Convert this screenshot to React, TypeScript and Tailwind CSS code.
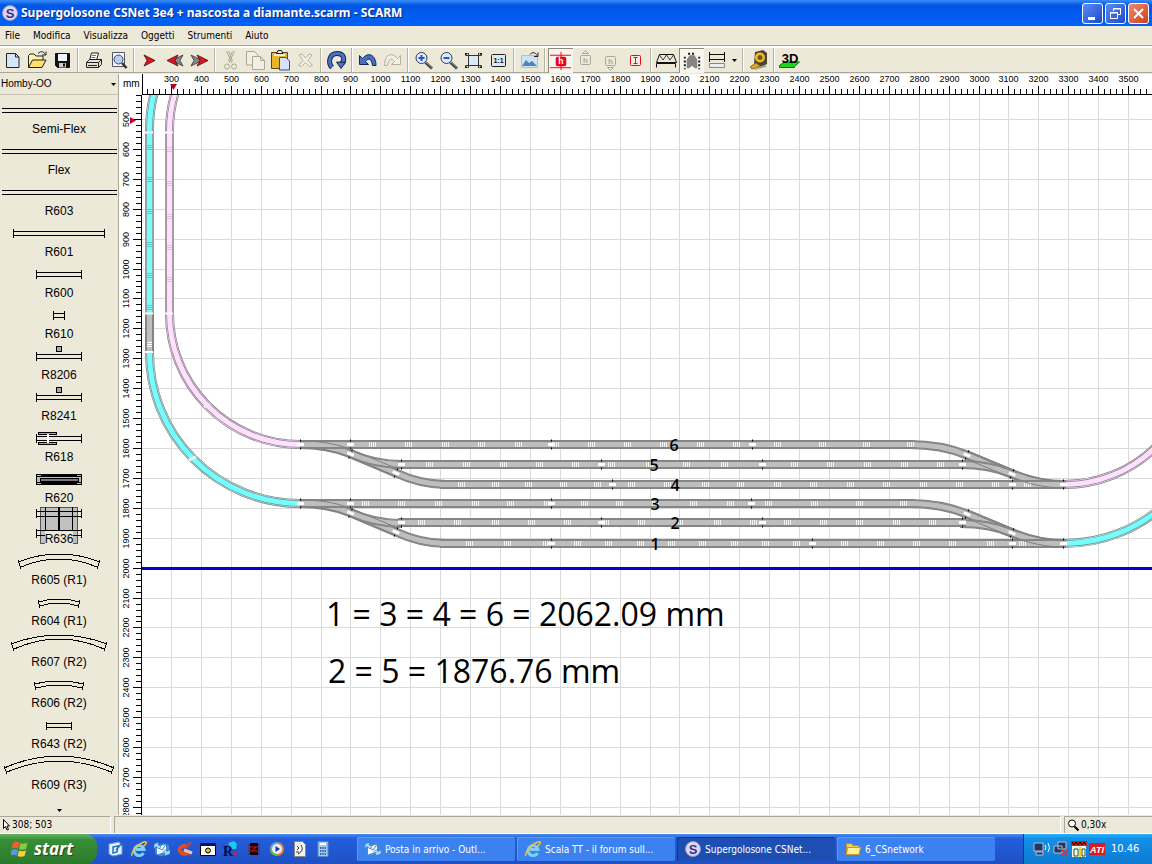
import React from "react";

// Plan scale: 100 mm on the layout is just under 30 px on screen
const SCALE = 0.2991;
const mmToX = (mm: number) => Math.round(29 + (mm - 300) * SCALE) + 0.5;
const mmToY = (mm: number) => Math.round(24 + (mm - 500) * SCALE) + 0.5;
const range = (from: number, to: number, step: number) =>
  Array.from({ length: Math.floor((to - from) / step) + 1 }, (_, i) => from + i * step);

const MENUS = ["File", "Modifica", "Visualizza", "Oggetti", "Strumenti", "Aiuto"];

/* ---------- Toolbar ---------- */

const arrowRight = "l11 5.5l-11 5.5l3 -5.5z";
const arrowLeft = "l-11 5.5l11 5.5l-3 -5.5z";

const Magnifier = ({ children }: { children?: React.ReactNode }) => (
  <>
    <path d="M14.5 14.5L21 20.5" stroke="#444" strokeWidth="3" />
    <path d="M15 14L21 19.5" stroke="#999" />
    <circle cx="10.5" cy="10" r="5.5" fill="#dcecff" stroke="#333c58" />
    {children}
  </>
);

const ICONS: Record<string, React.ReactNode> = {
  New: <path d="M6.5 5.5h9l3.5 3.5v10.5h-12.5zM15.5 5.5v3.5h3.5" fill="#d5e6fa" stroke="#222" />,
  Open: (
    <>
      <path d="M3.5 19.5v-12l1.5-1.5h4l2 2h7v4" fill="#fff3a8" stroke="#222" />
      <path d="M3.5 19.5l4-7.5h13.5l-4 7.5z" fill="#ffe168" stroke="#222" />
      <path d="M13 5.5c3-3 6-2 7 1m1-3v3.5h-4" stroke="#222" fill="none" />
    </>
  ),
  Save: (
    <>
      <path d="M5.5 5.5h14v14h-12l-2-2z" fill="#111" stroke="#111" />
      <path d="M8 6h9v7h-9z" fill="#eef4ff" />
      <path d="M9 15h7v4.5h-7z" fill="#ccc" />
      <path d="M13 15.5h2v3h-2z" fill="#111" />
    </>
  ),
  Print: (
    <>
      <path d="M8.5 12.5l2-7.5h7l-2 7.5z" fill="#fff" stroke="#222" />
      <path d="M11 7.5h4M10.5 9.5h4" stroke="#777" />
      <path d="M5.5 14.5l3-3h12v5l-3 3h-12z" fill="#e2e2da" stroke="#222" />
      <path d="M5.5 14.5h12v5M17.5 14.5l3-3M7 17.5h9" stroke="#222" fill="none" />
    </>
  ),
  Preview: (
    <>
      <path d="M6.5 4.5h12v14h-12z" fill="#f5f8ff" stroke="#556" />
      <path d="M16 15L20.5 20" stroke="#333" strokeWidth="2.5" />
      <circle cx="12.5" cy="11.5" r="4.5" fill="#b7d0ef" stroke="#446" />
    </>
  ),
  Start: <path d={"M7 7" + arrowRight} fill="#e8101c" stroke="#301010" strokeWidth=".8" />,
  Previous: (
    <>
      <path d={"M21 7" + arrowLeft} fill="#888" stroke="#333" strokeWidth=".8" />
      <path d={"M16 7" + arrowLeft} fill="#e8101c" stroke="#301010" strokeWidth=".8" />
    </>
  ),
  Next: (
    <>
      <path d={"M4 7" + arrowRight} fill="#888" stroke="#333" strokeWidth=".8" />
      <path d={"M10 7" + arrowRight} fill="#e8101c" stroke="#301010" strokeWidth=".8" />
    </>
  ),
  Cut: (
    <g fill="none" stroke="#aca899">
      <path d="M8.5 3l5.5 12M16.5 3l-5.5 12M10.5 3l4 10M14.5 3l-4 10" />
      <circle cx="9" cy="18.5" r="2.5" />
      <circle cx="16" cy="18.5" r="2.5" />
    </g>
  ),
  Copy: (
    <g fill="#f1efe2" stroke="#aca899">
      <path d="M3.5 3.5h8l3 3v10.5h-11z" />
      <path d="M9.5 8.5h8l4 4v9h-12zM17.5 8.5v4h4" />
    </g>
  ),
  Paste: (
    <>
      <path d="M3.5 4.5h16v16h-16z" fill="#e9b52c" stroke="#5b4510" />
      <path d="M6 6h11v2h-11z" fill="#eee" />
      <path d="M8.5 5.5l1.5-3h3.5l1.5 3z" fill="#f8e79b" stroke="#222" />
      <path d="M11.5 9.5h6.5l3.5 3.5v9h-10z" fill="#d5e4fb" stroke="#31507c" />
    </>
  ),
  Delete: <path d="M6 7l3-1 3.5 4 3.5-4 3 1-4 5.5 4.5 5-3 1-4-4-4 4-3-1 4.5-5z" fill="#f1efe2" stroke="#b5b1a2" />,
  Rotate: (
    <>
      <path d="M8 19.5c-4.5-5-2.500-14 5-14s8 6 5 10" fill="none" stroke="#182450" strokeWidth="5" />
      <path d="M8 19.5c-4.5-5-2.500-14 5-14s8 6 5 10" fill="none" stroke="#4a70c4" strokeWidth="3" />
      <path d="M12.5 14l9 .5-4.5 6z" fill="#4a70c4" stroke="#182450" />
    </>
  ),
  Undo: <path d="M4.5 7.5v9h9l-3-3c3-4 6-3 7 4h3.5c0-11-8-14-13.5-7z" fill="#456fc4" stroke="#17264e" />,
  Redo: <path d="M20.5 7.5v9h-9l3-3c-3-4-6-3-7 4h-3c0-11 7-14 13-7z" fill="#f1efe2" stroke="#b5b1a2" />,
  "Zoom in": <Magnifier><path d="M7.5 10h6M10.5 7v6" stroke="#2b55c8" strokeWidth="2" /></Magnifier>,
  "Zoom out": <Magnifier><path d="M7.5 10h6" stroke="#2b55c8" strokeWidth="2" /></Magnifier>,
  Fit: (
    <>
      <path d="M7.5 7.5h10v10h-10z" fill="#dbe8f6" />
      <path d="M7.5 5v15M17.500 5v15M5 7.5h15M5 17.5h15" stroke="#333" />
      <path d="M4 5h3l-3 3zM21 5h-3l3 3zM4 20h3l-3-3zM21 20h-3l3-3z" fill="#111" />
    </>
  ),
  "Actual size": (
    <>
      <rect x="5.5" y="6.5" width="14" height="12" rx="1" fill="#dbe8f6" stroke="#222" />
      <text x="12.5" y="15" textAnchor="middle" fontSize="7" fontWeight="700" fill="#111">1:1</text>
    </>
  ),
  Background: (
    <>
      <path d="M4.5 7.5h16v12h-16z" fill="#cde3f5" stroke="#a5c4e0" />
      <path d="M5 18l4-6 3 3 3-2 5 5z" fill="#4f84b5" />
      <path d="M13 6.5c2-3 6-2 7 1m1-3v4h-4" stroke="#222" fill="none" />
    </>
  ),
  "Track height": (
    <>
      <path d="M1 6.5h22M1 19.5h22M12.5 3v19" stroke="#f00018" />
      <rect x="7" y="8" width="11" height="10" rx="2" fill="#f00018" />
      <text x="12.5" y="16" textAnchor="middle" fontSize="9" fontWeight="700" fill="#fff">h</text>
    </>
  ),
  Raise: (
    <>
      <rect x="7.5" y="7.5" width="10" height="9" rx="1" fill="none" stroke="#aca899" />
      <path d="M9.5 5.5l3-3 3 3z" fill="none" stroke="#aca899" />
      <text x="12.5" y="15" textAnchor="middle" fontSize="8" fontWeight="700" fill="#aca899">h</text>
    </>
  ),
  Lower: (
    <>
      <rect x="7.5" y="8.5" width="10" height="9" rx="1" fill="none" stroke="#aca899" />
      <path d="M9.5 19.5l3 3 3-3z" fill="none" stroke="#aca899" />
      <text x="12.5" y="16" textAnchor="middle" fontSize="8" fontWeight="700" fill="#aca899">h</text>
    </>
  ),
  "Vertical lock": (
    <>
      <rect x="7.5" y="7.5" width="10" height="10" rx="1" fill="#fbe9e4" stroke="#e01020" />
      <path d="M12.5 9v7M10.5 9.5h4M10.5 15.5h4" stroke="#e01020" />
    </>
  ),
  Bridge: (
    <>
      <path d="M2.5 14.5l3-8h14l3 8z" fill="none" stroke="#111" />
      <path d="M5.5 7l3.500 5 3.500-5 3.500 5 3.500-5" fill="none" stroke="#111" strokeWidth=".8" />
      <path d="M2.5 19.500v-4h19v4" fill="none" stroke="#111" />
    </>
  ),
  Tunnel: (
    <>
      <path d="M7 20v-9l3-4.500h5l3 4.500v9h-2.500l-3-2.500-3 2.500z" fill="#858585" />
      <path d="M8.500 5h8M5 8v13M20 8v13" stroke="#111" strokeWidth="2" strokeDasharray="2 2" />
    </>
  ),
  Layers: (
    <>
      <path d="M5 6.5h16M5 11.5h16M5.5 4v10M20.5 4v10" stroke="#111" />
      <path d="M5.5 15.5h15v4h-15z" fill="#eee" stroke="#888" />
    </>
  ),
  Measure: (
    <>
      <path d="M9 4l8-2 4 3v11l-6 3-7-3z" fill="#4a4434" />
      <circle cx="14" cy="9.5" r="5" fill="#f4bd1b" />
      <circle cx="14" cy="9.5" r="2.5" fill="#6a5a2a" />
      <path d="M10 15l-6 4 2 2 8-3z" fill="#e6a918" stroke="#8a6a20" />
      <path d="M8 21l12-3" stroke="#a6a291" strokeWidth="2" />
    </>
  ),
  "3D view": (
    <>
      <path d="M2.5 17.500l5-3.500h15l-5 4.500v1h-15z" fill="#18d818" stroke="#087808" />
      <text x="13" y="15" textAnchor="middle" fontSize="13" fontWeight="700" fill="#000">3D</text>
    </>
  ),
};

const TOOL_GROUPS = [
  ["New", "Open", "Save"],
  ["Print", "Preview"],
  ["Start", "Previous", "Next"],
  ["Cut", "Copy", "Paste", "Delete"],
  ["Rotate"],
  ["Undo", "Redo"],
  ["Zoom in", "Zoom out", "Fit", "Actual size"],
  ["Background"],
  ["Track height", "Raise", "Lower", "Vertical lock"],
  ["Bridge", "Tunnel", "Layers", "menu"],
  ["Measure"],
  ["3D view"],
];
const PRESSED = ["Track height", "Tunnel"];

function Toolbar() {
  return (
    <div className="flex h-[25px] shrink-0 border-b border-[#aca899] font-['Liberation_Sans']">
      {TOOL_GROUPS.map((group, i) => (
        <div key={i} className="flex">
          {i > 0 && <div className="mx-[2px] w-[2px] border-l border-[#b8b4a5] bg-white" />}
          {group.map((name) =>
            name === "menu" ? (
              <button key={name} aria-label="Layer list" className="flex w-[11px] items-center justify-center">
                <svg width="5" height="3"><path d="M0 0h5l-2.5 3z" /></svg>
              </button>
            ) : (
              <button
                key={name}
                aria-label={name}
                className={`h-[25px] w-[25px] ${
                  PRESSED.includes(name) ? "border-t border-l border-[#8f8c7e] bg-[#f7f5ee]" : ""
                }`}
              >
                <svg viewBox="0 0 25 25" className="block size-full">{ICONS[name]}</svg>
              </button>
            )
          )}
        </div>
      ))}
    </div>
  );
}

/* ---------- Track library ---------- */

const straight = (x1: number, x2: number) => (
  <path d={`M${x1} 11.5H${x2}M${x1} 15.5H${x2}M${x1 + 0.5} 9v9M${x2 - 0.5} 9v9`} />
);
const flex = <path d="M2 11.5H117M2 15.5H117" />;
const curved = (x: number, endY: number, topY: number, inX: number, inEndY: number, inTopY: number) => {
  const r = 118 - x;
  const inR = 118 - inX;
  return (
    <path
      d={`M${x} ${endY}Q59 ${2 * topY - endY} ${r} ${endY}M${inX} ${inEndY}Q59 ${2 * inTopY - inEndY} ${inR} ${inEndY}
         M${x} ${endY - 2}L${inX} ${inEndY + 2}M${r} ${endY - 2}L${inR} ${inEndY + 2}`}
    />
  );
};
const feeder = (
  <>
    {straight(36, 82)}
    <path d="M56.5 3.5h5v5h-5z" fill="#aaa" />
  </>
);

const PARTS: { name: string; shape: React.ReactNode }[] = [
  { name: "Semi-Flex", shape: flex },
  { name: "Flex", shape: flex },
  { name: "R603", shape: flex },
  { name: "R601", shape: straight(13, 105) },
  { name: "R600", shape: straight(36, 82) },
  { name: "R610", shape: straight(53, 65) },
  { name: "R8206", shape: feeder },
  { name: "R8241", shape: feeder },
  {
    name: "R618",
    shape: (
      <>
        {straight(36, 82)}
        <path d="M38.5 7.5h18v2h-18zM38.5 17.5h18v2h-18z" fill="#aaa" />
        <path d="M48 9v9" stroke="#fff" strokeWidth="2" />
      </>
    ),
  },
  {
    name: "R620",
    shape: (
      <>
        <path d="M36.5 8.5h45v10h-45z" fill="#bbb" />
        <path d="M37 10.5h45M37 16.5h45M41 9.5h36M41 17.5h36" />
        <path d="M40 12h38v3h-38z" fill="#777" />
      </>
    ),
  },
  {
    name: "R636",
    shape: (
      <>
        <path d="M40.5 0v36h5V24h27v12h5V0z" fill="#c0c0c0" stroke="#555" />
        <path d="M45.5 0v24M72.5 0v24M36 4.5h46M36 9.5h46M36 23.5h46M36.5 2v9M81.5 2v9M36.5 22v9M81.5 22v9M36 28.5h9M73 28.5h9" />
        <path d="M59 0v24" strokeWidth="2" />
      </>
    ),
  },
  { name: "R605 (R1)", shape: curved(18, 14, 6, 21, 19, 11) },
  { name: "R604 (R1)", shape: curved(38, 13, 10, 40, 17, 14) },
  { name: "R607 (R2)", shape: curved(11, 14, 5, 14, 19, 9) },
  { name: "R606 (R2)", shape: curved(34, 13, 10, 36, 17, 14) },
  { name: "R643 (R2)", shape: curved(46, 12, 11, 47, 16, 15) },
  { name: "R609 (R3)", shape: curved(4, 15, 3, 7, 19, 8) },
];

function PartsPanel() {
  return (
    <aside className="flex w-[119px] shrink-0 flex-col overflow-hidden border-r border-[#aca899]">
      <div className="relative h-[21px] shrink-0 border-b border-[#c9c5b5]">
        <select aria-label="Library" className="block h-[20px] w-full appearance-none bg-transparent py-0 pl-px font-['Liberation_Sans'] text-[10px] leading-[20px] outline-none">
          <option>Homby-OO</option>
        </select>
        <svg width="5" height="3" className="pointer-events-none absolute top-[9px] right-[2px]"><path d="M0 0h5l-2.5 3z" /></svg>
      </div>
      <div className="min-h-0 flex-1 overflow-hidden pt-[2px]">
        {PARTS.map((part) => (
          <button key={part.name} className="flex h-[41px] w-full flex-col items-center font-['Liberation_Sans'] text-[12px] leading-[16px]">
            <svg height="24" className="block w-[118px] shrink-0 overflow-visible" fill="none" stroke="#000" shapeRendering="crispEdges">
              {part.shape}
            </svg>
            <span className="relative bg-[#ece9d8]">{part.name}</span>
          </button>
        ))}
        <div className="flex h-[40px] justify-center pt-[15px]">
          <svg width="5" height="3"><path d="M0 0h5l-2.5 3z" /></svg>
        </div>
      </div>
    </aside>
  );
}

/* ---------- Track plan ---------- */

const PALETTE = {
  gray: { edge: "#808080", bed: "#929292", fill: "#bebebe" },
  cyan: { edge: "#808c8c", bed: "#c4f0f0", fill: "#72ffff" },
  pink: { edge: "#90808f", bed: "#f6e6f6", fill: "#ffe0ff" },
};

function Track({ d, color }: { d: string; color: keyof typeof PALETTE }) {
  const c = PALETTE[color];
  return (
    <g fill="none">
      <path d={d} stroke={c.edge} strokeWidth="9" />
      <path d={d} stroke={c.bed} strokeWidth="7.5" />
      <path d={d} stroke={c.edge} strokeWidth="6.5" />
      <path d={d} stroke={c.fill} strokeWidth="5" />
    </g>
  );
}

const Joint = ({ x, y, angle = 0 }: { x: number; y: number; angle?: number }) => (
  <g transform={`translate(${x} ${y}) rotate(${angle})`}>
    <path d="M0 -5v2M0 3v2" stroke="#000" />
    <path d="M-3.5 0h7" stroke="#fff" strokeWidth="3" />
  </g>
);

// Yard tracks: sleeper marks and rail joints by x position
const YARD = [
  { no: 6, y: 444.5, labelX: 674, from: 300, to: 915, marks: [373, 409, 446, 482, 519, 556, 592, 628, 664, 701, 737, 778, 823, 867, 911], joints: [350, 551, 752] },
  { no: 5, y: 464.5, labelX: 654, from: 398, to: 966, marks: [430, 467, 504, 540, 576, 612, 650, 687, 725, 795, 831, 868, 905, 941], joints: [401, 601, 762, 962] },
  { no: 4, y: 484.5, labelX: 675, from: 440, to: 1066, marks: [462, 496, 529, 564, 598, 632, 668, 706, 741, 778, 814, 851, 887, 924, 960, 996, 1028], joints: [612, 1012] },
  { no: 3, y: 503.5, labelX: 655, from: 300, to: 915, marks: [366, 402, 439, 476, 511, 548, 585, 620, 656, 694, 731, 769, 815, 860, 904], joints: [350, 551, 751] },
  { no: 2, y: 522.5, labelX: 675, from: 398, to: 966, marks: [422, 458, 496, 532, 568, 606, 642, 680, 718, 754, 788, 824, 860, 897, 933], joints: [401, 601, 762, 962] },
  { no: 1, y: 543.5, labelX: 655, from: 440, to: 1066, marks: [470, 508, 547, 578, 609, 641, 672, 703, 735, 766, 797, 845, 881, 917, 953, 991, 1023], joints: [551, 812, 1012] },
];

function Plan() {
  return (
    <svg className="block size-full bg-white font-['Open_Sans']">
      <g stroke="#dadada" shapeRendering="crispEdges">
        {range(300, 9000, 100).map((mm) => (
          <React.Fragment key={mm}>
            <line x1={mmToX(mm)} x2={mmToX(mm)} y1="0" y2="100%" />
            <line y1={mmToY(mm + 200)} y2={mmToY(mm + 200)} x1="0" x2="100%" />
          </React.Fragment>
        ))}
      </g>
      <rect x="0" y="472" width="100%" height="3" fill="#0000d8" />

      <g transform="translate(-142 -95)">
        {/* Main line curves */}
        <Track color="cyan" d="M155 90A150 150 0 0 0 149.5 132V314" />
        <Track color="gray" d="M149.5 314V352" />
        <Track color="cyan" d="M149.5 352A151 151 0 0 0 300 503.5" />
        <Track color="pink" d="M176 90A131 131 0 0 0 169.5 132V313A131 131 0 0 0 300 444.5" />
        <Track color="pink" d="M1064 484.5A131 131 0 0 0 1195 353" />
        <Track color="cyan" d="M1064 543.5A150 150 0 0 0 1214 393" />
        {[148, 180, 212, 245, 276, 308].map((y) => (
          <path key={y} d={`M147 ${y - 2.5}h5m-5 2h5m-5 2h5`} stroke="#5cc8cc" />
        ))}
        {[150, 184, 217, 248, 280].map((y) => (
          <path key={y} d={`M167 ${y - 2.5}h5m-5 2h5m-5 2h5`} stroke="#e4c0e4" />
        ))}
        <path d="M147 342.5h5m-5 2h5m-5 2h5" stroke="#fff" />
        <path d="M145 132.5h8M145 313.5h8M145 352h8M165 132.5h8M165 313.5h8" stroke="#fff" strokeWidth="2" />
        <path d="M204 407l6 -3M189 460l7 -3" stroke="#eee" strokeWidth="3" />

        {/* Ladders, drawn once for each half of the yard */}
        {[0, 59].map((dy) => (
          <g key={dy} transform={`translate(0 ${dy})`}>
            <Track color="gray" d="M300 444.5C320 444.5 335 447.5 350 453.5L396 473C412 480.5 428 484.5 446 484.5" />
            <Track color="gray" d="M350 453.5C366 460.5 382 464.5 402 464.5" />
            <Track color="gray" d="M910 444.5C935 444.5 951 448.5 967 455L1012 474C1030 481 1046 484.5 1064 484.5" />
            <Track color="gray" d="M960 464.5C982 464.5 998 468 1012 474" />
          </g>
        ))}
        {YARD.map((t) => (
          <g key={t.no}>
            <Track color="gray" d={`M${t.from} ${t.y}H${t.to}`} />
            {t.marks.map((x) => (
              <path key={x} d={`M${x - 3.5} ${t.y - 2.5}v5m2 -5v5m2 -5v5m2 -5v5`} stroke="#f4f4f4" />
            ))}
            {t.joints.map((x) => (
              <Joint key={x} x={x + 0.5} y={t.y} />
            ))}
          </g>
        ))}
        {[0, 59].map((dy) => (
          <g key={dy} transform={`translate(0 ${dy})`}>
            {/* Rails of the turnouts crossing the straight tracks */}
            <path
              d="M300 441C325 441 340 445 352 450L398 469M300 448C322 448 336 452 349 457L395 476M1064 481C1046 481 1030 477 1014 470L968 451M1064 488C1046 488 1028 484 1010 477L966 459"
              fill="none"
              stroke="#808080"
            />
            <Joint x={300.5} y={444.5} />
            <Joint x={350.5} y={454} angle={22} />
            <Joint x={396} y={473} angle={22} />
            <Joint x={967} y={455} angle={22} />
            <Joint x={1012} y={474} angle={22} />
            <Joint x={1063.5} y={484.5} />
          </g>
        ))}
        {YARD.map((t) => (
          <text key={t.no} x={t.labelX} y={t.y + 6} textAnchor="middle" fontSize="16" fontWeight="600">{t.no}</text>
        ))}
        <text x="326" y="626" fontSize="32">1 = 3 = 4 = 6 = 2062.09 mm</text>
        <text x="328" y="683" fontSize="32">2 = 5 = 1876.76 mm</text>
      </g>
    </svg>
  );
}

function Workspace() {
  return (
    <div className="grid min-w-0 flex-1 grid-cols-[22px_minmax(0,1fr)] grid-rows-[21px_minmax(0,1fr)] border-l border-white bg-white">
      <div className="pt-[4px] pl-[3px] font-['Liberation_Sans'] text-[10px] leading-[12px]">mm</div>
      <svg className="block size-full font-['Liberation_Sans'] text-[9px]" shapeRendering="crispEdges">
        <path d="M0 20.5H9000M0.5 0v21" stroke="#000" />
        {range(220, 9000, 20).map((mm) => (
          <line key={mm} x1={mmToX(mm)} x2={mmToX(mm)} y1={mm % 100 ? 15 : 12} y2="20" stroke="#000" />
        ))}
        {range(300, 3500, 100).map((mm) => (
          <text key={mm} x={mmToX(mm)} y="8" textAnchor="middle">{mm}</text>
        ))}
        <path d="M28 10h7l-3.5 6z" fill="#c00020" shapeRendering="auto" />
      </svg>
      <svg className="block size-full font-['Liberation_Sans'] text-[9px]" shapeRendering="crispEdges">
        <path d="M21.5 0V9000" stroke="#000" />
        {range(420, 9000, 20).map((mm) => (
          <line key={mm} y1={mmToY(mm)} y2={mmToY(mm)} x1={mm % 100 ? 16 : 13} x2="21" stroke="#000" />
        ))}
        {range(500, 2800, 100).map((mm) => (
          <text key={mm} transform={`translate(9 ${mmToY(mm)}) rotate(-90)`} textAnchor="middle">{mm}</text>
        ))}
        <path d="M10 22v7l6 -3.5z" fill="#c00020" shapeRendering="auto" />
      </svg>
      <Plan />
    </div>
  );
}

/* ---------- Taskbar ---------- */

const ScarmLogo = () => (
  <svg viewBox="0 0 16 16" className="size-4 shrink-0">
    <circle cx="8" cy="8" r="7.5" fill="#dcd8ee" stroke="#9a98c0" />
    <text x="8" y="12.5" textAnchor="middle" fontSize="13" fontWeight="700" fill="#3c2c90" fontFamily="Liberation Sans">S</text>
  </svg>
);
const Explorer = () => (
  <svg viewBox="0 0 16 16" className="size-4 shrink-0" fill="none">
    <path d="M12.500 12A5 5 0 1 1 13 8.500H5" stroke="#7cd0ff" strokeWidth="3" />
    <path d="M1 15C-1 12 8 2 13 1s1 3-1 5" stroke="#f2c230" strokeWidth="1.5" />
  </svg>
);
const Outlook = () => (
  <svg viewBox="0 0 16 16" className="size-4 shrink-0">
    <path d="M1 5l9-3 5 2v9l-9 2.500-5-3z" fill="#3c8cd8" />
    <path d="M3 6l9-2.500v7l-9 3z" fill="#f4faff" />
    <path d="M3 6l5 3 4-5.500" fill="none" stroke="#4a80b8" />
    <path d="M0 3l5-2-1 2.500 3 2.500-2 2-3-2.500L0 8zM16 13l-6 2 1-2.500-2-2 2-2 2 2 3-2z" fill="#a8dcff" stroke="#1c60b0" strokeWidth=".5" />
  </svg>
);
const Folder = () => (
  <svg viewBox="0 0 16 16" className="size-4 shrink-0">
    <path d="M1.5 13.5v-11h5l1.5 2h6v9z" fill="#f4cf55" stroke="#b98a1c" />
    <path d="M1.5 13.5l1-7h13l-1.5 7z" fill="#fff09a" stroke="#c99a28" />
  </svg>
);

const QUICK_LAUNCH: { name: string; icon: React.ReactNode }[] = [
  {
    name: "Desktop",
    icon: (
      <svg viewBox="0 0 16 16" className="size-4">
        <path d="M1 3l10-2 3 4v8l-9 2-4-2z" fill="#e4f2ff" stroke="#6aa0d0" />
        <path d="M5 6l5-1-1 6-4 1zM8 9l6-7" fill="none" stroke="#2070c0" strokeWidth="1.5" />
      </svg>
    ),
  },
  { name: "Explorer", icon: <Explorer /> },
  { name: "Mail", icon: <Outlook /> },
  {
    name: "Cleaner",
    icon: (
      <svg viewBox="0 0 16 16" className="size-4" fill="none">
        <path d="M12 11a5 4 0 1 1-3-6" stroke="#e04c28" strokeWidth="4" />
        <path d="M14 1l-5 6" stroke="#e03c20" strokeWidth="2" />
        <path d="M7 9l8 3" stroke="#f4c0a8" strokeWidth="3" />
      </svg>
    ),
  },
  {
    name: "Settings",
    icon: (
      <svg viewBox="0 0 16 16" className="size-4">
        <path d="M.5 2.5h15v12H.5z" fill="#fff" stroke="#000" />
        <path d="M0 2h16v3H0z" fill="#101060" />
        <circle cx="8" cy="9.5" r="2.5" fill="#d8c820" stroke="#000" />
      </svg>
    ),
  },
  {
    name: "Rail",
    icon: (
      <svg viewBox="0 0 16 16" className="size-4">
        <path d="M5 2l6-2 3 3-1 5H8z" fill="#20c8e8" />
        <text x="0" y="15" fontSize="14" fontWeight="700" fill="#08084c" fontFamily="Liberation Serif">R</text>
        <path d="M10 12l3-2 1 3-2 2z" fill="#e01050" />
      </svg>
    ),
  },
  {
    name: "Chip",
    icon: (
      <svg viewBox="0 0 16 16" className="size-4">
        <path d="M2 4h12M2 7h12M2 10h12M2 13h12" stroke="#801010" />
        <path d="M4 2h8v12H4z" fill="#180000" />
        <path d="M4 6h8M4 10h8M6 10l4-4" fill="none" stroke="#d01818" />
      </svg>
    ),
  },
  {
    name: "Player",
    icon: (
      <svg viewBox="0 0 16 16" className="size-4">
        <circle cx="8" cy="8" r="7" fill="#e88030" />
        <path d="M8 1a7 7 0 0 0-7 7h7z" fill="#48a8e8" />
        <path d="M8 15a7 7 0 0 1-7-7h7z" fill="#58b848" />
        <circle cx="8" cy="8" r="5" fill="#e8f0ff" />
        <path d="M6.5 5l4.5 3-4.5 3z" fill="#1838a0" />
      </svg>
    ),
  },
  {
    name: "Music",
    icon: (
      <svg viewBox="0 0 16 16" className="size-4">
        <path d="M2.5.5h8l3 3v12h-11z" fill="#f4f4ec" stroke="#888" />
        <path d="M5 5l2 2-2 2M9 4c2 4 2 6-3 9M4 11h3" fill="none" stroke="#333" />
      </svg>
    ),
  },
  {
    name: "Calculator",
    icon: (
      <svg viewBox="0 0 16 16" className="size-4">
        <path d="M3 .5h10v15H3z" fill="#a8c8f0" stroke="#5888c8" />
        <path d="M5 3h6" stroke="#fff" strokeWidth="2" />
        <path d="M5 7h6M5 10h6M5 13h6" stroke="#3868b0" strokeWidth="2" strokeDasharray="1.5 .8" />
      </svg>
    ),
  },
];

const WINDOWS = [
  { title: "Posta in arrivo - Outl...", icon: <Outlook /> },
  { title: "Scala TT - il forum sull...", icon: <Explorer /> },
  { title: "Supergolosone CSNet...", icon: <ScarmLogo />, active: true },
  { title: "6_CSnetwork", icon: <Folder /> },
];

function Taskbar() {
  return (
    <footer className="flex h-[30px] shrink-0 bg-linear-to-b from-[#4a8df0] via-[#245edb] via-15% to-[#1f50c4] text-white">
      <button className="flex w-[97px] shrink-0 items-center gap-[5px] rounded-r-xl bg-linear-to-b from-[#5fb55c] via-[#388e38] via-20% to-[#2c7a2c] pl-[11px] font-['Open_Sans'] text-[17px] leading-[22px] font-bold italic text-shadow-[1px_1px_1px_#1a4a1a]">
        <svg viewBox="0 0 18 18" className="size-[18px]">
          <path d="M2 3c2-2 4-1.5 6.5-.5L7 8.5C5 7.5 3 7.5.5 8.5z" fill="#f0602c" />
          <path d="M9.5 3c2 1 4 1 7-.5L15 9c-2.5 1-5 1-7 0z" fill="#8ccc3c" />
          <path d="M.5 10C3 9 5 9 7 10l-1.5 5.5C3.5 14.5 1.5 14.5-.5 15.5z" fill="#5c94f0" />
          <path d="M8 10.5c2 1 4 1 7 0L13.5 16c-2.5 1-5 1-7 0z" fill="#fbd03c" />
        </svg>
        start
      </button>
      <div className="flex w-[260px] shrink-0 items-center gap-[7px] pl-[11px]">
        {QUICK_LAUNCH.map((q) => (
          <button key={q.name} aria-label={q.name}>{q.icon}</button>
        ))}
      </div>
      <div className="flex min-w-0 flex-1 items-center gap-[2px]">
        {WINDOWS.map((w) => (
          <button
            key={w.title}
            className={`flex h-[24px] w-[158px] min-w-0 items-center gap-[4px] rounded-[2px] pl-[8px] font-['DejaVu_Sans_Condensed','DejaVu_Sans'] text-[10px] whitespace-nowrap ${
              w.active ? "bg-[#1c4eb4] shadow-[inset_1px_1px_1px_#123680]" : "bg-[#3c81f0] shadow-[inset_1px_1px_0_#5a9af8]"
            }`}
          >
            {w.icon}
            {w.title}
          </button>
        ))}
      </div>
      <div className="flex w-[129px] shrink-0 items-center gap-[2px] border-l border-[#0e3a9c] bg-linear-to-b from-[#2cb4f8] via-[#1290e8] via-15% to-[#0f7ad0] pl-[9px] font-['DejaVu_Sans_Condensed','DejaVu_Sans']">
        <svg viewBox="0 0 18 16" className="h-4 w-[18px]">
          <path d="M1 2h9v8H1zM3 11h7v3H3z" fill="#28345c" stroke="#aac0e0" />
          <path d="M12 4q2 3 0 5M15 2q3 5 0 9" fill="none" stroke="#fff" />
        </svg>
        <svg viewBox="0 0 16 16" className="size-4">
          <path d="M5 1h8v7H5zM1 5h8v7H1z" fill="#28345c" stroke="#aac0e0" />
          <path d="M8 8l7 7M15 8l-7 7" stroke="#e83028" strokeWidth="2" />
        </svg>
        <svg viewBox="0 0 16 16" className="size-4">
          <path d="M1 5h14v11H1z" fill="#f8f8e0" />
          <path d="M0 0h16v5H0z" fill="#e01818" />
          <path d="M1 1l2 3 2-3 2 3 2-3 2 3 2-3 2 3" fill="none" stroke="#000" />
          <path d="M3 8h4v7H3zM11 8h3v7h-3z" fill="#fff" stroke="#205040" />
          <path d="M8 6h2v10H8z" fill="#e8d820" />
        </svg>
        <svg viewBox="0 0 16 16" className="size-4">
          <path d="M0 2h16v12H0z" fill="#d81c20" />
          <text x="8" y="11.5" textAnchor="middle" fontSize="9" fontWeight="700" fontStyle="italic" fill="#fff" fontFamily="Liberation Sans">ATI</text>
        </svg>
        <time className="ml-[4px] text-[11px]">10.46</time>
      </div>
    </footer>
  );
}

/* ---------- Window ---------- */

const caption = "flex size-[21px] items-center justify-center rounded-[3px] border border-white";

export default function App() {
  return (
    <div className="flex h-screen flex-col overflow-hidden bg-[#ece9d8] text-black">
      <header className="flex h-[26px] shrink-0 items-center bg-linear-to-b from-[#3a8cf8] via-[#0055e5] via-20% to-[#0062fa] pr-[3px] pl-[2px] text-white">
        <ScarmLogo />
        <h1 className="ml-[3px] min-w-0 flex-1 truncate font-['Noto_Sans'] text-[12px] leading-[20px] font-bold text-shadow-[1px_1px_1px_#0a2a80]">
          Supergolosone CSNet 3e4 + nascosta a diamante.scarm - SCARM
        </h1>
        <div className="flex gap-[2px]">
          <button aria-label="Minimize" className={`${caption} bg-linear-to-br from-[#5c8cf4] to-[#1c48c8]`}>
            <svg width="15" height="15"><path d="M3 11h7v3H3z" fill="#fff" /></svg>
          </button>
          <button aria-label="Restore" className={`${caption} bg-linear-to-br from-[#5c8cf4] to-[#1c48c8]`}>
            <svg width="15" height="15" fill="none" stroke="#fff">
              <path d="M5.5 5v-2.5h7v6h-2.5M5 3h8M2.5 6.5h7v6h-7zM2 7h8" />
            </svg>
          </button>
          <button aria-label="Close" className={`${caption} bg-linear-to-br from-[#f08868] to-[#d03c10]`}>
            <svg width="15" height="15"><path d="M3 3l9 9M12 3l-9 9" stroke="#fff" strokeWidth="2" /></svg>
          </button>
        </div>
      </header>

      <nav className="flex h-[20px] shrink-0 items-center gap-[13px] border-b border-[#aca899] pl-[5px] font-['DejaVu_Sans_Condensed','DejaVu_Sans'] text-[10px]">
        {MENUS.map((m) => (
          <button key={m}>{m}</button>
        ))}
      </nav>
      <div className="h-[2px] shrink-0 bg-white" />
      <Toolbar />

      <main className="flex min-h-0 flex-1 pt-px">
        <PartsPanel />
        <Workspace />
      </main>

      <div className="flex h-[19px] shrink-0 gap-[3px] border-b border-white pt-px font-['DejaVu_Sans_Condensed','DejaVu_Sans'] text-[10px] leading-[16px]">
        <div className="flex w-[111px] items-center gap-[2px] border-t border-r border-t-[#aca899] border-r-white pl-[3px]">
          <svg width="7" height="12"><path d="M.5.5v9l2-2 1.5 3.5 1.5-.5-1.5-3.5h2.5z" fill="#fff" stroke="#000" /></svg>
          308; 503
        </div>
        <div className="flex-1 border-t border-r border-l border-[#aca899] border-r-white" />
        <div className="flex w-[88px] items-center gap-[2px] border-t border-l border-[#aca899] pl-[2px]">
          <svg width="12" height="12">
            <circle cx="5" cy="4.5" r="3.5" fill="#fff" stroke="#000" />
            <path d="M7.5 7.5l4 4" stroke="#000" strokeWidth="2" />
          </svg>
          0,30x
        </div>
      </div>

      <Taskbar />
    </div>
  );
}
